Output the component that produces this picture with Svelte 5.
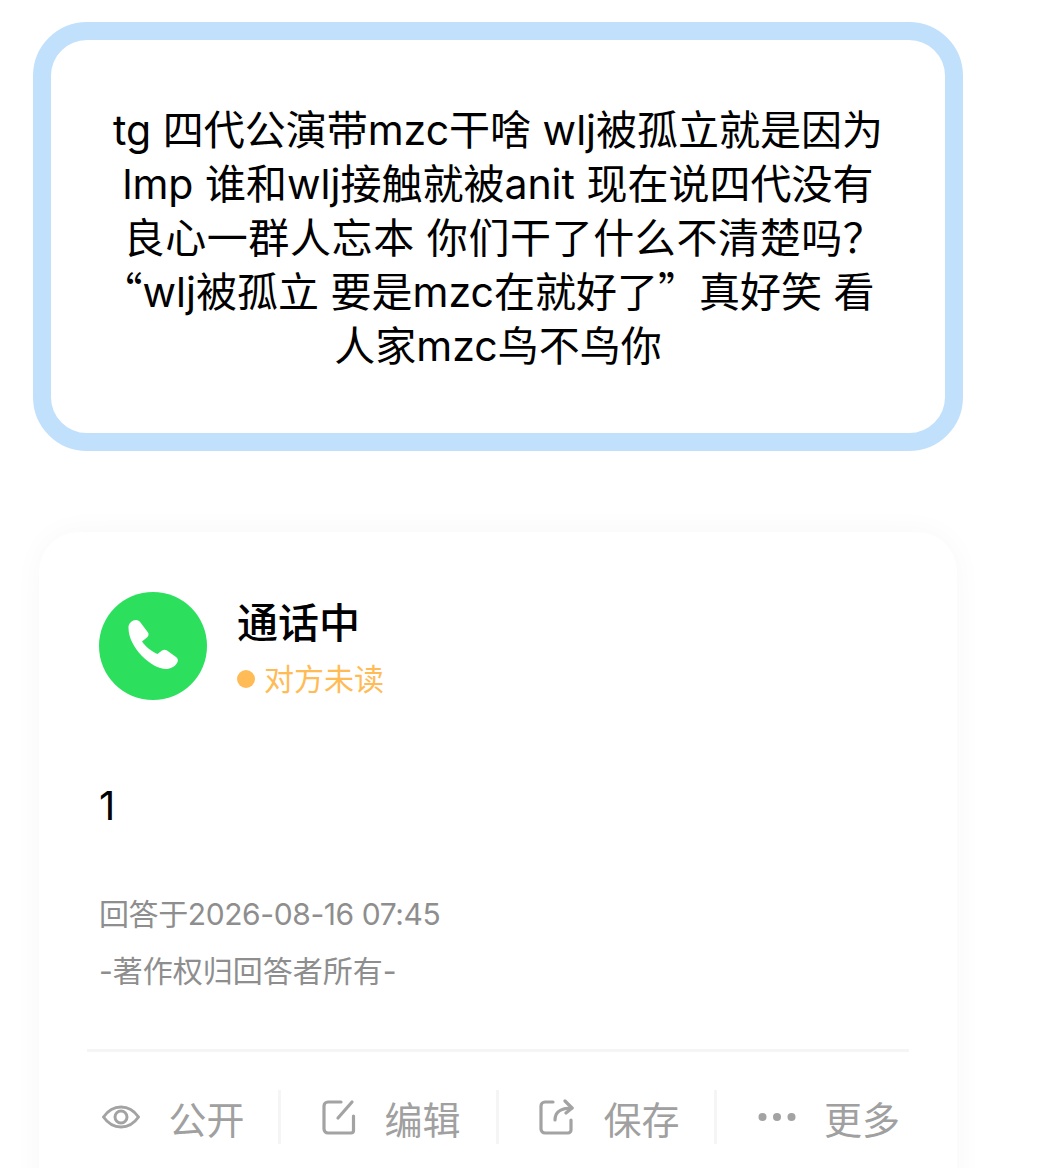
<script>
	const lines = [
		'tg 四代公演带mzc干啥 wlj被孤立就是因为',
		'lmp 谁和wlj接触就被anit 现在说四代没有'
	];
</script>

<div class="page">
	<section class="question">
		{#each lines as line}
			<p>{line}</p>
		{/each}
		<p class="wide">良心一群人忘本 你们干了什么不清楚吗？</p>
		<p><span class="quote open">“</span>wlj被孤立 要是mzc在就好了<span class="quote">”</span>真好笑 看</p>
		<p>人家mzc鸟不鸟你</p>
	</section>

	<section class="card">
		<header class="head">
			<div class="avatar">
				<svg class="phone" width="50" height="50" viewBox="0 0 50 50" fill="#fff">
					<path d="M0.500 8C0 4 4 0 8 0c2 0 3.500 1 4.500 2.500L20 12.500c1 1.500.5 3.500-.5 4.500L14 21.500C17 26 24 32 29.500 34l4.500-3.500c1.500-1 3.500-1 5 0l9 6.500c2 1.500 2.500 4 1 6-2 3.500-6.500 6-11 6C24 49 .5 28 .5 8z"/>
				</svg>
			</div>
			<div class="who">
				<div class="name">通话中</div>
				<div class="status"><span class="dot"></span>对方未读</div>
			</div>
		</header>

		<div class="answer">1</div>
		<div class="meta date">回答于2026-08-16 07:45</div>
		<div class="meta copy">-著作权归回答者所有-</div>

		<div class="rule"></div>

		<footer class="actions">
			<div class="action">
				<svg width="38" height="26" viewBox="0 0 38 26" fill="none" stroke="#a3a3a3" stroke-width="3">
					<path d="M1.500 13C6 6.500 11.500 3 19 3s13 3.500 17.500 10C32 19.500 26.500 23 19 23S6 19.500 1.500 13z" stroke-linejoin="round"/>
					<circle cx="19" cy="13" r="6"/>
				</svg>
				<span>公开</span>
			</div>
			<div class="action">
				<svg width="34" height="36" viewBox="0 0 34 36" fill="none" stroke="#a3a3a3" stroke-width="3.200" stroke-linecap="round">
					<path d="M19 3H6a4 4 0 0 0-4 4v23a4 4 0 0 0 4 4h23a2.500 2.500 0 0 0 2.500-2.500V17"/>
					<path d="M16 19 30 3"/>
				</svg>
				<span>编辑</span>
			</div>
			<div class="action">
				<svg width="36" height="36" viewBox="0 0 36 36" fill="none" stroke="#a3a3a3" stroke-width="3.200" stroke-linecap="round" stroke-linejoin="round">
					<path d="M14 3H6a4 4 0 0 0-4 4v23a4 4 0 0 0 4 4h23a3 3 0 0 0 3-3V21"/>
					<path d="M16 21c0-7 5-12 17-12"/>
					<path d="M26 2l7 7-6 5"/>
				</svg>
				<span>保存</span>
			</div>
			<div class="action">
				<svg width="38" height="10" viewBox="0 0 38 10" fill="#a3a3a3">
					<circle cx="4.500" cy="5" r="4"/>
					<circle cx="19" cy="5" r="4"/>
					<circle cx="33.500" cy="5" r="4"/>
				</svg>
				<span>更多</span>
			</div>
		</footer>
	</section>
</div>

<style>
	:global(body) {
		background: #ffffff;
		margin: 0;
		font-family: 'Inter', 'Noto Sans CJK SC', 'Noto Sans', sans-serif;
		color: #000;
	}

	.page {
		height: 1168px;
		overflow: hidden;
		padding: 22px 75px 0 33px;
		box-sizing: border-box;
		width: 1038px;
	}

	.question {
		box-sizing: border-box;
		height: 429px;
		border: 18px solid #c1e0fc;
		border-radius: 54px;
		padding: 63px 0 0;
		text-align: center;
	}

	.question p {
		margin: 0;
		font-size: 41px;
		line-height: 54px;
		height: 54px;
		white-space: nowrap;
	}

	.question p.wide {
		letter-spacing: 0.6px;
		padding-left: 12px;
	}

	.quote {
		font-family: 'Noto Sans CJK SC', sans-serif;
		line-height: 1;
	}

	.quote.open {
		margin-left: -20px;
	}

	.card {
		margin: 81px 6px 0;
		height: 700px;
		box-sizing: border-box;
		padding: 60px 48px 0;
		background: #fff;
		border-radius: 40px;
		box-shadow: 0 0 30px rgba(0, 0, 0, 0.035);
	}

	.head {
		display: flex;
		align-items: center;
		gap: 30px;
		padding-left: 12px;
	}

	.avatar {
		width: 108px;
		height: 108px;
		border-radius: 50%;
		background: #2ce05e;
		display: flex;
		align-items: center;
		justify-content: center;
	}

	.phone {
		margin-top: -3px;
	}

	.who {
		margin-top: 2px;
	}

	.name {
		font-size: 41px;
		line-height: 56px;
		font-weight: 500;
	}

	.status {
		display: flex;
		align-items: center;
		gap: 9px;
		font-size: 30px;
		line-height: 40px;
		color: #ffbb55;
		margin-top: 8px;
	}

	.dot {
		width: 18px;
		height: 18px;
		border-radius: 50%;
		background: #ffbb55;
	}

	.answer {
		margin: 78px 0 0 12px;
		font-size: 40px;
		line-height: 56px;
	}

	.meta {
		margin: 60px 0 0 12px;
		font-size: 30px;
		line-height: 40px;
		color: #8e8e8e;
	}

	.meta.date {
		letter-spacing: -0.4px;
	}

	.meta.copy {
		margin-top: 17px;
	}

	.rule {
		height: 3px;
		background: #f5f5f5;
		margin-top: 58px;
	}

	.actions {
		display: grid;
		grid-template-columns: repeat(4, 218px);
		margin: 38px -26px 0 -24px;
	}

	.action {
		height: 54px;
		display: flex;
		align-items: center;
		justify-content: center;
		gap: 28px;
		padding-left: 6px;
		border-right: 3px solid #f5f5f5;
		color: #a0a0a0;
		font-size: 38px;
	}

	.action:last-child {
		border-right: 0;
	}
</style>
